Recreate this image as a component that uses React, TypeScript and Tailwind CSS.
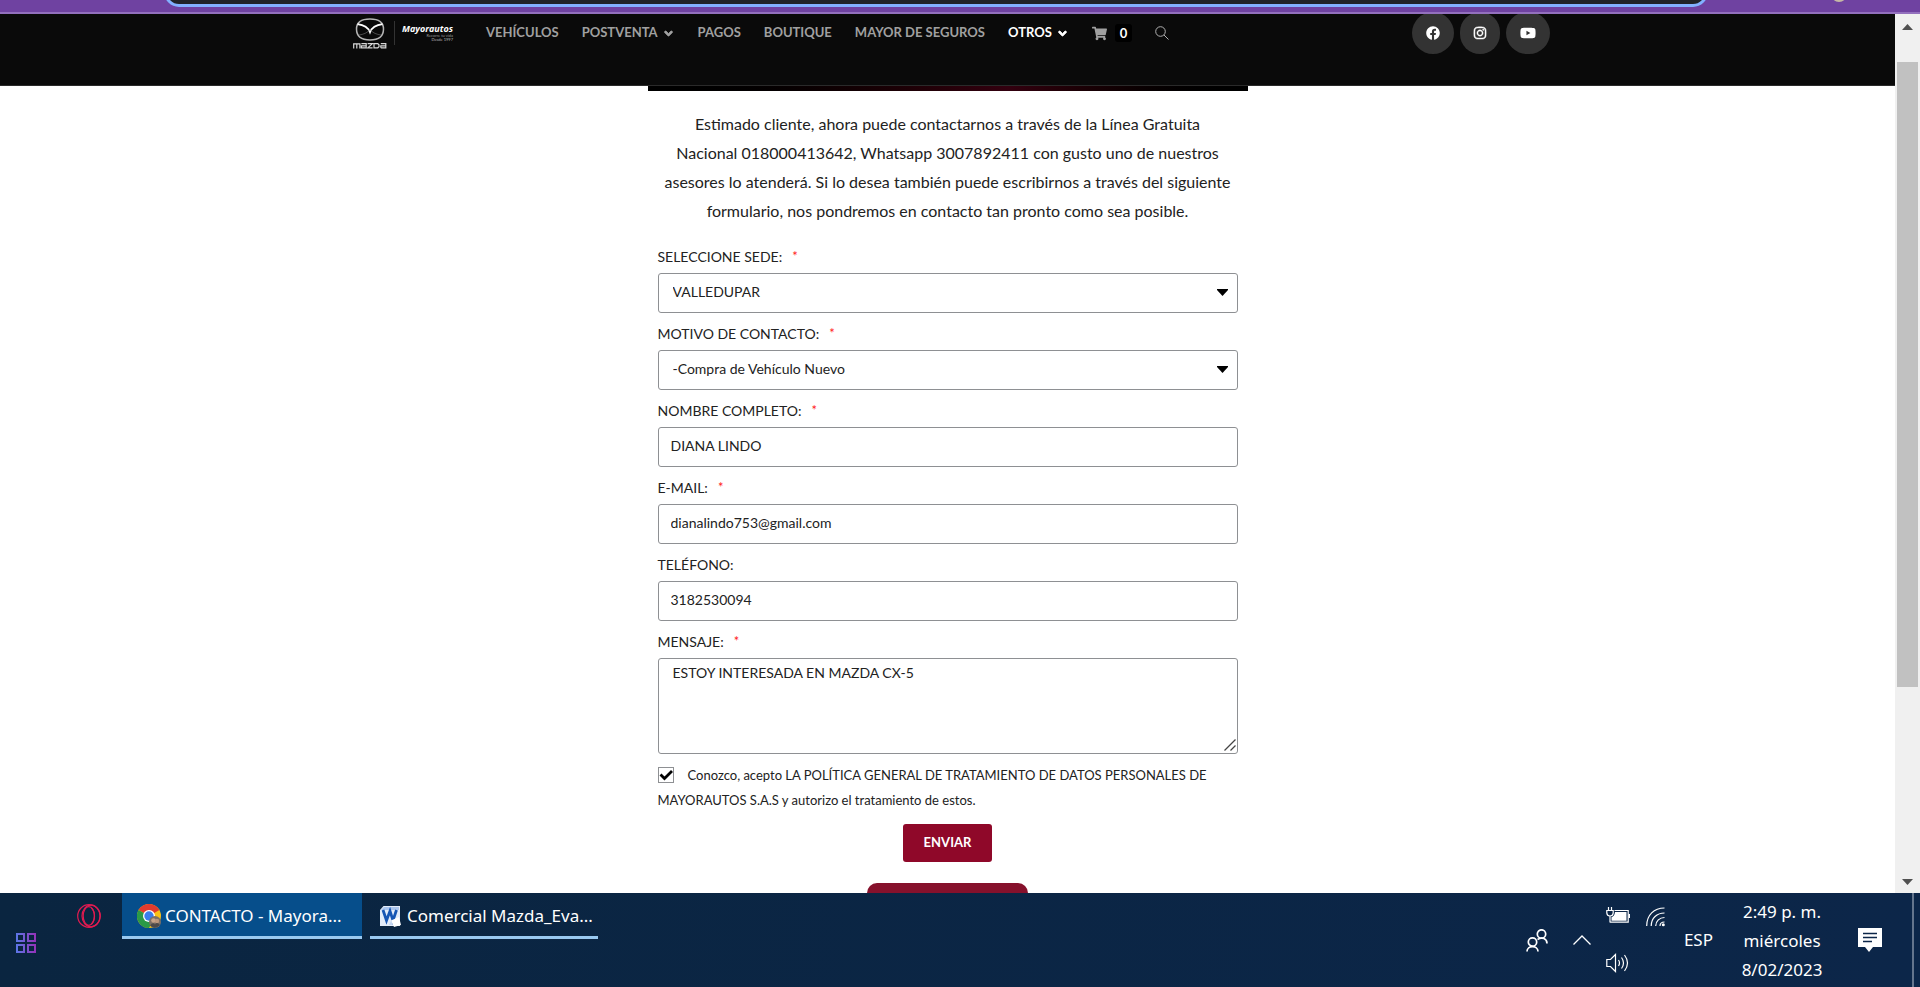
import React, { useState } from "react";
import { FaAngleDown, FaFacebook, FaInstagram, FaShoppingCart, FaYoutube } from "react-icons/fa";

const field =
  "h-10 w-full rounded-[3px] border border-[#8e9093] bg-white px-3 pb-[3px] text-[14px] text-[#222] outline-none";

function Label({ htmlFor, children, required }: { htmlFor: string; children: React.ReactNode; required?: boolean }) {
  return (
    <label htmlFor={htmlFor} className="flex h-[37px] items-center gap-[10px] pt-1 text-[14px] text-[#222]">
      {children}
      {required && <span className="text-[13px] text-[#ff2020]">*</span>}
    </label>
  );
}

function MazdaLogo() {
  return (
    <svg viewBox="0 0 34 31" className="h-[31px] w-[34px] shrink-0" fill="none" aria-label="Mazda">
      <path d="M17 .9C25 .9 30.500 3.500 30.500 11S25 22 17 22 3.500 18.500 3.500 11 9 .9 17 .9z" stroke="#b5b5b5" strokeWidth="1.500" />
      <path d="M4.500 6.200C10.500 7 15 9 17 14.200C19 9 23.500 7 29.500 6.200" stroke="#fff" strokeWidth="1.800" />
      <path d="M6 17C10 16.500 14.500 15 17 11.500M28 17C24 16.500 19.500 15 17 11.500" stroke="#666" strokeWidth="0.700" />
      <g stroke="#d8d8d8" strokeWidth="1.200">
        <path d="M.7 30.500v-4.700h6.200v4.700M3.800 25.700v4.800M8.400 25.700h4.800v4.100H8.400v-2h4.800M14.600 25.700h4.800l-4.600 4.100h4.800M21 25.700h3.800l1.200 1v2.100l-1.200 1H21zM27.800 25.700h5v4.800M27.800 29.800v-2h5M27.800 29.800h5" />
      </g>
    </svg>
  );
}

function Header() {
  const link = "text-[#a0a0a0] hover:text-white";
  return (
    <header className="flex h-[72px] shrink-0 items-start border-b border-[#2a2a2a] bg-[#0a0a0a] pl-[353px]">
      <a href="#inicio" className="flex h-[38px] w-[101px] items-center gap-[7px]">
        <MazdaLogo />
        <span className="h-6 w-px shrink-0 bg-[#333]" />
        <span className="flex flex-col items-end text-white">
          <span className="font-['Open_Sans'] text-[9px] leading-[10px] font-bold italic">Mayorautos</span>
          <span className="text-[4px] leading-[4px] text-[#999]">Recorre tu vida</span>
          <span className="text-[4px] leading-[4px] text-[#bbb]">Desde 1997</span>
        </span>
      </a>
      <nav className="ml-8 flex h-[38px] items-center gap-[23px] text-[13px] font-bold whitespace-nowrap">
        <a href="#vehiculos" className={link}>VEHÍCULOS</a>
        <a href="#postventa" className={`flex items-center gap-1 ${link}`}>POSTVENTA <FaAngleDown size={13} strokeWidth={30} stroke="currentColor" /></a>
        <a href="#pagos" className={link}>PAGOS</a>
        <a href="#boutique" className={link}>BOUTIQUE</a>
        <a href="#seguros" className={link}>MAYOR DE SEGUROS</a>
        <a href="#otros" className="flex items-center gap-1 text-white">OTROS <FaAngleDown size={13} strokeWidth={30} stroke="currentColor" /></a>
        <a href="#carrito" className="flex items-center gap-2 text-[#a0a0a0]">
          <FaShoppingCart size={15} />
          <span className="rounded-[3px] bg-black px-[5px] text-[13px] leading-[18px] text-white">0</span>
        </a>
        <button type="button" aria-label="Buscar" className="text-[#b0b0b0]">
          <svg viewBox="0 0 14 14" className="h-[14px] w-[14px]" fill="none" stroke="currentColor"><circle cx="5.500" cy="5.500" r="4.800" /><path d="M9 9l4.500 4.500" /></svg>
        </button>
      </nav>
      <div className="mr-[345px] ml-auto flex h-[40px] items-end gap-[6px] overflow-hidden text-white">
        <a href="#facebook" aria-label="Facebook" className="flex h-[42px] w-[42px] items-center justify-center rounded-full bg-[#333]"><FaFacebook size={14} /></a>
        <a href="#instagram" aria-label="Instagram" className="flex h-[42px] w-[40px] items-center justify-center rounded-full bg-[#333]"><FaInstagram size={14} strokeWidth={16} stroke="currentColor" /></a>
        <a href="#youtube" aria-label="YouTube" className="flex h-[42px] w-[44px] items-center justify-center rounded-full bg-[#333]"><FaYoutube size={16} /></a>
      </div>
    </header>
  );
}

function Select({ id, value }: { id: string; value: string }) {
  return (
    <div className="relative">
      <select id={id} defaultValue={value} className={`${field} appearance-none pl-[14px]`}>
        <option>{value}</option>
      </select>
      <svg viewBox="0 0 11 7" className="pointer-events-none absolute top-4 right-[10px] h-[7px] w-[11px]"><path d="M0 0h11v1L5.500 7L0 1z" fill="#000" /></svg>
    </div>
  );
}

function ContactForm() {
  const [accepted, setAccepted] = useState(true);
  return (
    <form className="flex w-[580px] flex-col text-[#222]" onSubmit={(e) => e.preventDefault()}>
      <Label htmlFor="sede" required>SELECCIONE SEDE:</Label>
      <Select id="sede" value="VALLEDUPAR" />
      <Label htmlFor="motivo" required>MOTIVO DE CONTACTO:</Label>
      <Select id="motivo" value="-Compra de Vehículo Nuevo" />
      <Label htmlFor="nombre" required>NOMBRE COMPLETO:</Label>
      <input id="nombre" defaultValue="DIANA LINDO" className={field} />
      <Label htmlFor="email" required>E-MAIL:</Label>
      <input id="email" type="email" defaultValue="dianalindo753@gmail.com" className={field} />
      <Label htmlFor="telefono">TELÉFONO:</Label>
      <input id="telefono" type="tel" defaultValue="3182530094" className={field} />
      <Label htmlFor="mensaje" required>MENSAJE:</Label>
      <div className="relative">
        <textarea
          id="mensaje"
          defaultValue="ESTOY INTERESADA EN MAZDA CX-5"
          className="block h-24 w-full resize-none rounded-[3px] border border-[#8e9093] px-[14px] py-1 text-[14px] leading-5 outline-none"
        />
        <svg viewBox="0 0 12 12" className="pointer-events-none absolute right-[2px] bottom-[3px] h-3 w-3" fill="none" stroke="#444" strokeWidth="1.300"><path d="M.5 11.500l11-11M6.500 11.500l5-5" /></svg>
      </div>
      <label className="mt-[9px] text-[13px] leading-[25px]">
        <span className="relative mr-[14px] inline-block h-4 w-4 align-[-3px]">
          <input
            type="checkbox"
            checked={accepted}
            onChange={(e) => setAccepted(e.target.checked)}
            className="block h-4 w-4 appearance-none border border-[#8e9093] bg-white"
          />
          {accepted && (
            <svg viewBox="0 0 16 16" className="pointer-events-none absolute inset-0 h-4 w-4" fill="none" stroke="#000" strokeWidth="2.800"><path d="M2.500 7.500l4 4L14 4" /></svg>
          )}
        </span>
        Conozco, acepto LA POLÍTICA GENERAL DE TRATAMIENTO DE DATOS PERSONALES DE MAYORAUTOS S.A.S y autorizo el tratamiento de estos.
      </label>
      <button type="submit" className="mt-[11px] h-[38px] w-[89px] self-center rounded-[3px] bg-[#8f0829] text-[13px] font-bold text-white">ENVIAR</button>
    </form>
  );
}

function Scrollbar() {
  return (
    <div className="flex w-[25px] shrink-0 flex-col items-center bg-[#f0f0f0]" aria-hidden="true">
      <svg viewBox="0 0 25 48" className="h-12 w-[25px] shrink-0"><path d="M7 16l5.500-6L18 16z" fill="#505050" /></svg>
      <div className="h-[625px] w-[21px] bg-[#c1c1c1]" />
      <svg viewBox="0 0 25 22" className="mt-auto h-[22px] w-[25px] shrink-0"><path d="M7 8l5.500 6L18 8z" fill="#505050" /></svg>
    </div>
  );
}

function ChromeIcon() {
  return (
    <svg viewBox="0 0 24 24" className="h-6 w-6 shrink-0">
      <circle cx="12" cy="12" r="12" fill="#fbc116" />
      <path d="M12 12L1.600 6A12 12 0 0 1 22.400 6z" fill="#e33b2e" />
      <path d="M12 12L1.600 6A12 12 0 0 0 12 24l5-9z" fill="#2a9a47" />
      <circle cx="12" cy="12" r="6" fill="#fff" />
      <circle cx="12" cy="12" r="4.700" fill="#3b7ded" />
      <circle cx="18" cy="18" r="6" fill="#7d7065" />
      <circle cx="16.500" cy="16.500" r="2.300" fill="#c9a489" />
      <circle cx="20" cy="17" r="2.200" fill="#bd977c" />
      <path d="M13 21.500q3-4 5-1q2-3 5 .5Q18 26 13 21.500z" fill="#4c4a4a" />
    </svg>
  );
}

function WordIcon() {
  return (
    <svg viewBox="0 0 21 21" className="h-[21px] w-[21px] shrink-0">
      <path d="M3.500 0H20v20H0V4z" fill="#e3ecf9" />
      <path d="M1 4l3-3h15v3H1z" fill="#a9c5ee" />
      <path d="M12 13h7v6H9z" fill="#c3d5f1" />
      <path d="M3 4l3.500 10.500L10 5l3 9.500L16.500 4" fill="none" stroke="#1656b4" strokeWidth="2.800" />
      <path d="M11 14.500l8-3.500 2 8-7 2z" fill="#fff" />
    </svg>
  );
}

function Taskbar() {
  return (
    <footer className="flex h-[94px] shrink-0 bg-linear-to-r from-[#0a2540] to-[#0c2649] font-['Noto_Sans',sans-serif] text-[17px] text-white">
      <button type="button" aria-label="Inicio" className="ml-4 h-5 w-5 self-start pt-10">
        <svg viewBox="0 0 20 20" className="h-5 w-5" fill="none" strokeWidth="2">
          <defs><linearGradient id="start" gradientUnits="userSpaceOnUse" x1="0" x2="20" y1="0" y2="0"><stop stopColor="#5b78e8" /><stop offset="1" stopColor="#9531b8" /></linearGradient></defs>
          <path d="M1 1h7v7H1zM12 1h7v7h-7zM1 12h7v7H1zM12 12h7v7h-7z" stroke="url(#start)" />
        </svg>
      </button>
      <button type="button" aria-label="Opera" className="mt-[11px] ml-[41px] h-6 w-6">
        <svg viewBox="0 0 24 24" className="h-6 w-6" fill="none" stroke="#e01b50" strokeWidth="1.200">
          <circle cx="12" cy="12" r="11.300" />
          <ellipse cx="14" cy="12" rx="9" ry="10.800" />
          <ellipse cx="11.800" cy="12" rx="5.600" ry="9.300" />
          <path d="M14.500 4q3 3 3 8t-3 8" />
        </svg>
      </button>
      <button type="button" className="ml-[21px] flex h-[46px] w-[240px] items-center gap-1 border-b-[3px] border-[#99c9f0] bg-[#064e8b] pt-[3px] pl-[15px] whitespace-nowrap">
        <ChromeIcon />CONTACTO - Mayora...
      </button>
      <button type="button" className="ml-2 flex h-[46px] w-[228px] items-center gap-[6px] border-b-[3px] border-[#99c9f0] pt-[3px] pl-[10px] whitespace-nowrap">
        <WordIcon />Comercial Mazda_Eva...
      </button>
      <div className="ml-auto flex items-center">
        <svg viewBox="0 0 22 23" className="mr-[25px] h-[23px] w-[22px]" fill="none" stroke="#fff" strokeWidth="1.700"><circle cx="15.500" cy="5" r="4.200" /><circle cx="6.500" cy="13" r="4.200" /><path d="M1 22.500c0-6.500 11-6.500 11 0M11.500 10.500C16 7.500 21 9.500 21 14.500" /></svg>
        <svg viewBox="0 0 18 10" className="mr-[15px] h-[10px] w-[18px]" fill="none" stroke="#fff" strokeWidth="1.300"><path d="M.5 9.500L9 1l8.500 8.500" /></svg>
        <div className="flex flex-col gap-[29px]">
          <svg viewBox="0 0 24 17" className="h-[17px] w-6" fill="none" stroke="#fff" strokeWidth="1.200"><path d="M2.500 0v3.500M5.500 0v3.500M.8 3.500h6.400V6Q7 9 4 9T.8 6zM4 9v6.500M8.500 3.500h13.700v11.700H4M23.500 7v4" /><path d="M9 5h11.500v8.700H5.500v-3.500q3-1 3.500-5.200z" fill="#fff" stroke="none" /></svg>
          <svg viewBox="0 0 23 20" className="h-5 w-[23px]" fill="none" stroke="#fff" strokeWidth="1.200"><path d="M.8 6.500h3.700L9.500 1.500v17L4.500 13.500H.8zM12.500 7q2 3 0 6M15.500 4.500q4 5.500 0 11M18.500 2q6 8 0 16" /></svg>
        </div>
        <svg viewBox="0 0 19 20" className="mb-[46px] ml-4 h-5 w-[19px]" fill="none" stroke="#fff" strokeWidth="1.200"><path d="M.7 19C.7 8 8 1 18.500 1M5.200 19C5.200 11 11 6 18.500 6M9.700 19c0-5 4-8.500 8.800-8.500M14 19q0-4 4.500-4" /><circle cx="17.300" cy="17.800" r="1.500" fill="#fff" stroke="none" /></svg>
        <span className="ml-[19px]">ESP</span>
        <div className="ml-[26px] w-[86px] text-center leading-[29px] whitespace-nowrap">
          <div>2:49 p. m.</div><div>miércoles</div><div>8/02/2023</div>
        </div>
        <svg viewBox="0 0 24 24" className="ml-[33px] h-6 w-6"><path d="M0 0h24v19H15l-4 5-4-5H0z" fill="#fff" /><path d="M5 5.500h14M5 9.500h14M5 13.500h9" stroke="#0c2649" strokeWidth="1.300" /></svg>
        <div className="mr-[6px] ml-[30px] h-full w-[2px] self-stretch bg-[#64758d]" />
      </div>
    </footer>
  );
}

export default function App() {
  return (
    <div className="flex h-screen flex-col overflow-hidden bg-white font-['Lato',sans-serif]">
      <div className="flex h-[14px] shrink-0 items-start overflow-hidden border-b-2 border-[#9370bd] bg-[#6f42a1] pl-[164px]">
        <div className="-mt-[23px] h-[30px] w-[1544px] rounded-full border-[3px] border-[#82b1ff] bg-[#202428]" />
        <div className="-mt-[14px] ml-[123px] h-4 w-4 rounded-full bg-[#c5b8a5]" />
      </div>
      <div className="flex min-h-0 flex-1">
        <div className="flex min-w-0 flex-1 flex-col overflow-hidden">
          <Header />
          <main className="flex flex-col items-center">
            <div className="h-[5px] w-[600px] bg-linear-to-r from-black via-[#33000f] via-60% to-black" />
            <p className="mt-[18px] mb-[11px] w-[580px] text-center text-[16px] leading-[29px] text-[#222]">
              Estimado cliente, ahora puede contactarnos a través de la Línea Gratuita
              <br />Nacional 018000413642, Whatsapp 3007892411 con gusto uno de nuestros
              <br />asesores lo atenderá. Si lo desea también puede escribirnos a través del siguiente
              <br />formulario, nos pondremos en contacto tan pronto como sea posible.
            </p>
            <ContactForm />
            <div className="mt-[21px] h-12 w-[161px] rounded-[10px] bg-[#86112c]" />
          </main>
        </div>
        <Scrollbar />
      </div>
      <Taskbar />
    </div>
  );
}
